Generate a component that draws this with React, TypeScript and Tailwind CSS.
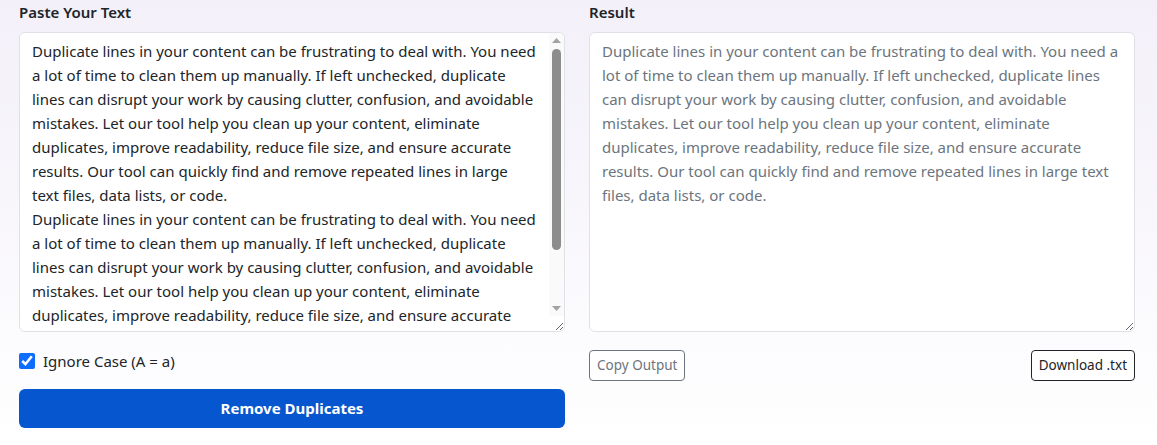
import { useEffect, useRef, useState } from "react";

const para =
  "Duplicate lines in your content can be frustrating to deal with. You need a lot of time to clean them up manually. If left unchecked, duplicate lines can disrupt your work by causing clutter, confusion, and avoidable mistakes. Let our tool help you clean up your content, eliminate duplicates, improve readability, reduce file size, and ensure accurate results. Our tool can quickly find and remove repeated lines in large text files, data lists, or code.";

const TRACK = 253;

export default function App() {
  const [input, setInput] = useState(para + "\n" + para + "\n");
  const [ignoreCase, setIgnoreCase] = useState(true);
  const [thumb, setThumb] = useState({ top: 1, height: 200 });
  const boxRef = useRef<HTMLTextAreaElement>(null);

  // keep the drawn scrollbar in sync with the textarea
  const syncThumb = () => {
    const el = boxRef.current;
    if (!el) return;
    const ratio = Math.min(1, el.clientHeight / el.scrollHeight);
    setThumb({
      top: 1 + (el.scrollTop / el.scrollHeight) * TRACK,
      height: Math.max(20, TRACK * ratio - 2),
    });
  };

  useEffect(syncThumb, [input]);

  return (
    <div className="min-h-[445px] bg-gradient-to-b from-[#f3f0f9] via-[#fbfafd] via-70% to-white pl-[19px] pr-[22px] font-['Noto_Sans',sans-serif] text-[#212529]">
      <div className="grid grid-cols-2 gap-6">
        {/* Input column */}
        <div className="flex flex-col">
          <label className="h-8 pt-[2px] text-[15px] font-semibold leading-5">Paste Your Text</label>
          <div className="relative">
            <textarea
              ref={boxRef}
              value={input}
              onScroll={syncThumb}
              onChange={(e) => setInput(e.target.value)}
              className="block h-[300px] w-full resize-y overflow-y-scroll rounded-md border border-[#dee2e6] bg-white py-1.5 pl-3 pr-[27px] text-[15px] leading-6 text-[#212529] outline-none [scrollbar-width:none]"
            />
            <div
              aria-hidden
              className="pointer-events-none absolute top-px right-px bottom-[16px] flex w-[15px] flex-col rounded-tr-md bg-[#fafafa]"
            >
              <div className="flex h-[15px] items-start justify-center pt-[5px]">
                <svg width="9" height="5" viewBox="0 0 9 5">
                  <path d="M4.5 0 9 5H0z" fill="#a3a3a3" />
                </svg>
              </div>
              <div className="relative flex-1">
                <div
                  className="absolute left-[3px] w-[9px] rounded-full bg-[#8c8c8c]"
                  style={{ top: thumb.top, height: thumb.height }}
                />
              </div>
              <div className="flex h-[15px] items-start justify-center pt-[5px]">
                <svg width="9" height="5" viewBox="0 0 9 5">
                  <path d="M0 0h9L4.5 5z" fill="#a3a3a3" />
                </svg>
              </div>
            </div>
          </div>
          <label className="mt-[19px] flex items-center gap-2 text-[15px] leading-5">
            <input
              type="checkbox"
              checked={ignoreCase}
              onChange={(e) => setIgnoreCase(e.target.checked)}
              className="m-0 h-4 w-4 accent-[#0d6efd]"
            />
            <span>Ignore Case (A = a)</span>
          </label>
          <button className="mt-[18px] h-[39px] w-full rounded-md bg-[#0656d0] text-[15px] font-bold text-white">
            Remove Duplicates
          </button>
        </div>

        {/* Output column */}
        <div className="flex flex-col">
          <label className="h-8 pt-[2px] text-[15px] font-semibold leading-5">Result</label>
          <textarea
            readOnly
            value={para}
            className="block h-[300px] w-full resize-y rounded-md border border-[#dee2e6] bg-white px-3 py-1.5 text-[15px] leading-6 text-[#6c757d] outline-none"
          />
          <div className="mt-[18px] flex items-center justify-between">
            <button className="h-[31px] rounded border border-[#6c757d] bg-white px-[7px] text-[13.5px] text-[#6c757d]">
              Copy Output
            </button>
            <button className="h-[31px] rounded border border-[#212529] bg-white px-[7px] text-[13.5px] text-[#212529]">
              Download .txt
            </button>
          </div>
        </div>
      </div>
    </div>
  );
}
